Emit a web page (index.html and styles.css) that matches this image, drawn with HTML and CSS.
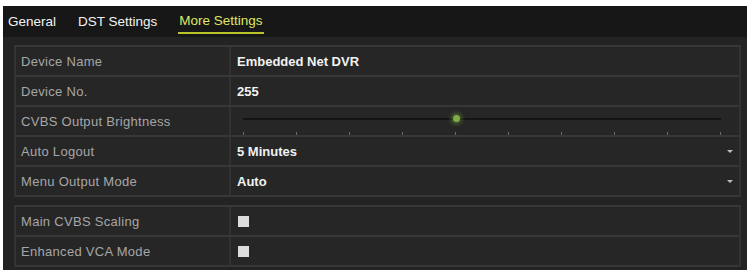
FILE: index.html
```html
<!DOCTYPE html>
<html>
<head>
<meta charset="utf-8">
<link rel="stylesheet" href="styles.css">
</head>
<body>
<div class="frame">
  <div class="tabs">
    <span class="tab">General</span>
    <span class="tab">DST Settings</span>
    <span class="tab active">More Settings</span>
  </div>
  <div class="panel">
    <div class="group">
      <div class="row"><div class="label">Device Name</div><div class="value">Embedded Net DVR</div></div>
      <div class="row"><div class="label">Device No.</div><div class="value">255</div></div>
      <div class="row"><div class="label">CVBS Output Brightness</div>
        <div class="value slider">
          <div class="track"><div class="knob"></div></div>
          <div class="ticks"><i></i><i></i><i></i><i></i><i></i><i></i><i></i><i></i><i></i><i></i></div>
        </div>
      </div>
      <div class="row"><div class="label">Auto Logout</div><div class="value select">5 Minutes<span class="arrow"></span></div></div>
      <div class="row"><div class="label">Menu Output Mode</div><div class="value select">Auto<span class="arrow"></span></div></div>
    </div>
    <div class="group second">
      <div class="row"><div class="label">Main CVBS Scaling</div><div class="value"><span class="check"></span></div></div>
      <div class="row"><div class="label">Enhanced VCA Mode</div><div class="value"><span class="check"></span></div></div>
    </div>
  </div>
</div>
</body>
</html>
```
FILE: styles.css
```css
html, body { margin: 0; padding: 0; background: #ffffff; }
body { font-family: "Liberation Sans", Arial, sans-serif; }
.frame {
  margin: 6px 4px 0 3px;
  height: 264px;
  background: #232323;
  overflow: hidden;
}
.tabs {
  height: 31px;
  background: #171717;
  display: flex;
  align-items: stretch;
  gap: 20px;
  padding-left: 4px;
  font-size: 13.5px;
  color: #f2f2f2;
}
.tab {
  display: flex;
  align-items: center;
  padding: 2px 1px 0 1px;
  border-bottom: 3px solid transparent;
  box-sizing: border-box;
}
.tab.active {
  color: #dfe665;
  border-bottom: 2px solid #b8c42a;
  height: 28px;
}
.panel {
  padding: 8px 6px 0 11px;
}
.group {
  border-left: 2px solid #333333;
  border-right: 2px solid #333333;
  border-top: 2px solid #383838;
}
.group.second {
  margin-top: 8px;
}
.row {
  display: grid;
  grid-template-columns: 215px 1fr;
  height: 28px;
  border-bottom: 2px solid #373737;
  background: #262626;
}
.label {
  display: flex;
  align-items: center;
  padding-left: 5px;
  color: #a6a6a6;
  font-size: 13px;
  letter-spacing: 0.3px;
  border-right: 2px solid #323232;
}
.value {
  display: flex;
  align-items: center;
  padding-left: 6px;
  color: #f2f2f2;
  font-size: 13px;
  font-weight: bold;
  position: relative;
}
.select { justify-content: space-between; padding-right: 6px; }
.arrow {
  width: 0; height: 0;
  border-left: 3px solid transparent;
  border-right: 3px solid transparent;
  border-top: 3px solid #bdbdbd;
}
.check {
  width: 11px; height: 11px;
  background: #dcdcdc;
  margin-left: 1px;
}
.slider {
  flex-direction: column;
  align-items: stretch;
  justify-content: flex-start;
  padding: 0 18px 0 12px;
}
.track {
  margin-top: 11px;
  height: 2px;
  background: #141414;
  position: relative;
}
.knob {
  position: absolute;
  left: 210px;
  top: -3px;
  width: 7px; height: 7px;
  border-radius: 50%;
  background: #7faa46;
  box-shadow: 0 0 4px 2px rgba(100,150,50,0.55);
}
.ticks {
  display: flex;
  justify-content: space-between;
  margin-top: 12px;
}
.ticks i {
  width: 1px;
  height: 3px;
  background: #6a6a6a;
}
```
